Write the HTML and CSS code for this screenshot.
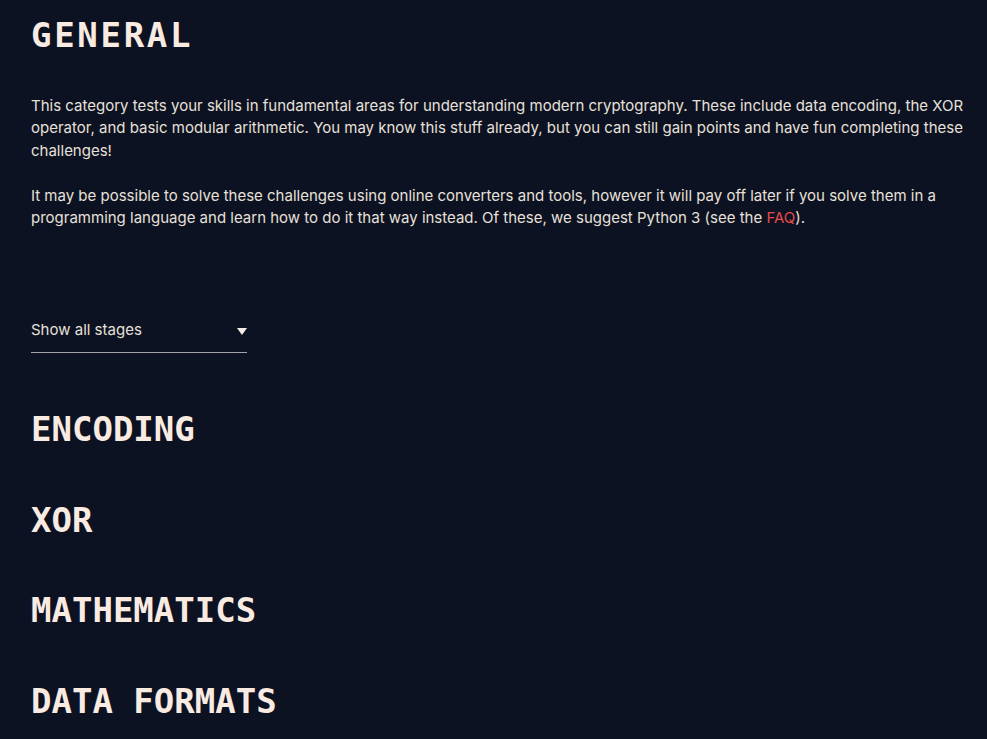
FILE: index.html
```html
<!DOCTYPE html>
<html lang="en">
<head>
<meta charset="utf-8">
<title>General</title>
<link rel="stylesheet" href="styles.css">
</head>
<body>
<main class="page">
  <h1 class="title">GENERAL</h1>
  <div class="intro">
    <p>This category tests your skills in fundamental areas for understanding modern cryptography. These include data encoding, the XOR operator, and basic modular arithmetic. You may know this stuff already, but you can still gain points and have fun completing these challenges!</p>
    <p>It may be possible to solve these challenges using online converters and tools, however it will pay off later if you solve them in a programming language and learn how to do it that way instead. Of these, we suggest Python 3 (see the <a class="link" href="#">FAQ</a>).</p>
  </div>
  <div class="select">
    <span class="select-label">Show all stages</span>
    <svg class="select-arrow" width="10" height="7" viewBox="0 0 10 7"><polygon points="0,0 10,0 5,7" fill="#f5ece6"/></svg>
  </div>
  <section class="stages">
    <h2 class="stage">ENCODING</h2>
    <h2 class="stage">XOR</h2>
    <h2 class="stage">MATHEMATICS</h2>
    <h2 class="stage">DATA FORMATS</h2>
  </section>
</main>
</body>
</html>
```
FILE: styles.css
```css
html, body {
  margin: 0;
  background: #0c1221;
}
body {
  font-family: Inter, "Noto Sans", sans-serif;
  color: #e8e0db;
}
.page {
  padding: 15.3px 14px 0 31px;
}
.title {
  margin: 0;
  font-family: "DejaVu Sans Mono", monospace;
  font-weight: bold;
  font-size: 34px;
  line-height: 40.8px;
  letter-spacing: 2.7px;
  color: #f9ebe2;
}
.intro {
  margin-top: 38.9px;
  font-size: 15px;
  line-height: 22.5px;
}
.intro p {
  margin: 0 0 22.5px 0;
}
.intro p:last-child {
  margin-bottom: 0;
}
.link {
  color: #e54b4b;
  text-decoration: none;
}
.select {
  margin-top: 89.3px;
  width: 216px;
  display: flex;
  align-items: center;
  justify-content: space-between;
  padding-bottom: 10.2px;
  border-bottom: 1px solid #a3a3a8;
  font-size: 15px;
  line-height: 22.5px;
}
.select-arrow {
  margin-right: 0;
  margin-top: 1px;
}
.stages {
  margin-top: 56.3px;
  display: flex;
  flex-direction: column;
  gap: 49.7px;
}
.stage {
  margin: 0;
  font-family: "DejaVu Sans Mono", monospace;
  font-weight: bold;
  font-size: 34px;
  line-height: 40.8px;
  color: #f9ebe2;
}
```
